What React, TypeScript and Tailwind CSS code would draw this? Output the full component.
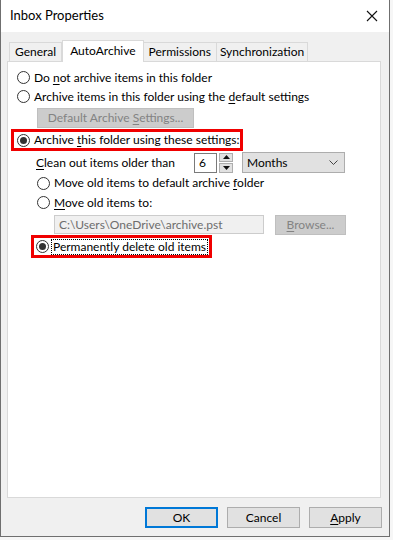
import React from 'react';

const font = { fontFamily: '"Segoe UI", Lato, "Noto Sans", sans-serif' };

function Radio({ checked }: { checked?: boolean }) {
  return (
    <span className="flex h-[13px] w-[13px] shrink-0 items-center justify-center rounded-full border border-[#333333] bg-white">
      {checked && <span className="h-[7px] w-[7px] rounded-full bg-[#333333]" />}
    </span>
  );
}

function U({ children }: { children: React.ReactNode }) {
  return <span className="underline underline-offset-2">{children}</span>;
}

export default function App() {
  return (
    <div className="h-[540px] w-[393px] bg-[#f6f6f6] text-[12px] text-black" style={font}>
      <div className="flex h-[537px] w-[390px] flex-col border-x border-b border-[#6f6f6f] bg-[#f0f0f0]">
        {/* title bar */}
        <div className="flex h-[32px] shrink-0 items-center justify-between bg-white pl-[9px] pr-[11px]">
          <span className="text-[13px]">Inbox Properties</span>
          <svg width="12" height="12" viewBox="0 0 12 12" className="mt-[-1px]">
            <path d="M1 1L11 11M11 1L1 11" stroke="#111" strokeWidth="1.1" />
          </svg>
        </div>

        <div className="flex flex-1 flex-col px-[6px]">
          {/* tabs */}
          <div className="relative z-10 mt-[8px] flex h-[21px] items-end pl-[2px]">
            <div className="flex h-[19px] items-center border border-b-0 border-[#d9d9d9] bg-[#f0f0f0] px-[5px]">General</div>
            <div className="mb-[-1px] flex h-[22px] items-start border border-b-0 border-[#d9d9d9] bg-white px-[7px] pt-[1px]">AutoArchive</div>
            <div className="flex h-[19px] items-center border border-b-0 border-l-0 border-[#d9d9d9] bg-[#f0f0f0] px-[5px]">Permissions</div>
            <div className="flex h-[19px] items-center border border-b-0 border-l-0 border-[#d9d9d9] bg-[#f0f0f0] px-[3px]">Synchronization</div>
          </div>

          {/* panel */}
          <div className="flex h-[437px] w-[374px] flex-col border border-[#d9d9d9] bg-white pl-[3px] pt-[6px]">
            <div className="flex h-[19px] items-center gap-[4px] pl-[6px]">
              <Radio />
              <span>Do <U>n</U>ot archive items in this folder</span>
            </div>
            <div className="flex h-[19px] items-center gap-[4px] pl-[6px]">
              <Radio />
              <span>Archive items in this folder using the <U>d</U>efault settings</span>
            </div>
            <div className="ml-[26px] mt-[2px] flex h-[20px] w-[157px] items-center justify-center border border-[#bfbfbf] bg-[#cccccc] text-[#838383]">
              <span>Default Archive <U>S</U>ettings...</span>
            </div>
            <div className="mt-[1px] flex h-[22px] w-[232px] items-center gap-[4px] border-[3px] border-[#f00000] pl-[3px]">
              <Radio checked />
              <span className="whitespace-nowrap">Archive <U>t</U>his folder using these settings:</span>
            </div>

            <div className="mt-[1px] flex h-[21px] items-center pl-[25px]">
              <span className="w-[158px]">
                <U>C</U>lean out items older than
              </span>
              <div className="flex h-[20px] w-[23px] items-center border border-[#7a7a7a] pl-[4px]">6</div>
              <div className="ml-[2px] flex h-[20px] w-[14px] flex-col gap-[1px]">
                <div className="flex flex-1 items-center justify-center border border-[#adadad] bg-[#e1e1e1]">
                  <svg width="7" height="4" viewBox="0 0 7 4"><path d="M0 4L3.5 0L7 4Z" fill="#111" /></svg>
                </div>
                <div className="flex flex-1 items-center justify-center border border-[#adadad] bg-[#e1e1e1]">
                  <svg width="7" height="4" viewBox="0 0 7 4"><path d="M0 0L3.5 4L7 0Z" fill="#111" /></svg>
                </div>
              </div>
              <div className="ml-[9px] flex h-[21px] w-[103px] items-center justify-between border border-[#adadad] bg-[#e1e1e1] pl-[4px] pr-[6px]">
                <span>Months</span>
                <svg width="9" height="5" viewBox="0 0 9 5"><path d="M0.5 0.5L4.5 4.5L8.5 0.5" stroke="#444" fill="none" /></svg>
              </div>
            </div>

            <div className="flex h-[20px] items-center gap-[4px] pl-[26px]">
              <Radio />
              <span>Move old items to default archive <U>f</U>older</span>
            </div>
            <div className="flex h-[19px] items-center gap-[4px] pl-[26px]">
              <Radio />
              <span><U>M</U>ove old items to:</span>
            </div>
            <div className="mt-[3px] flex h-[19px] items-center pl-[43px]">
              <div className="flex h-[19px] w-[210px] items-center border border-[#cccccc] bg-[#f0f0f0] pl-[4px] text-[#6d6d6d]">
                C:\Users\OneDrive\archive.pst
              </div>
              <div className="ml-[11px] flex h-[20px] w-[71px] items-center justify-center border border-[#bfbfbf] bg-[#cccccc] text-[#838383]">
                <span><U>B</U>rowse...</span>
              </div>
            </div>

            <div className="ml-[20px] mt-[1px] flex h-[23px] w-fit items-center gap-[2px] border-[3px] border-[#f00000] pl-[2px] pr-[1px]">
              <Radio checked />
              <span className="whitespace-nowrap border border-dotted border-black px-[1px] leading-[14px]">Permanently delete old items</span>
            </div>
          </div>

          {/* buttons */}
          <div className="mt-[9px] flex justify-end gap-[9px] pr-[1px]">
            <div className="flex h-[21px] w-[73px] items-center justify-center border-2 border-[#0078d7] bg-[#e1e1e1]">OK</div>
            <div className="flex h-[21px] w-[73px] items-center justify-center border border-[#adadad] bg-[#e1e1e1]">Cancel</div>
            <div className="flex h-[21px] w-[73px] items-center justify-center border border-[#adadad] bg-[#e1e1e1]">
              <span><U>A</U>pply</span>
            </div>
          </div>
        </div>
      </div>
    </div>
  );
}
